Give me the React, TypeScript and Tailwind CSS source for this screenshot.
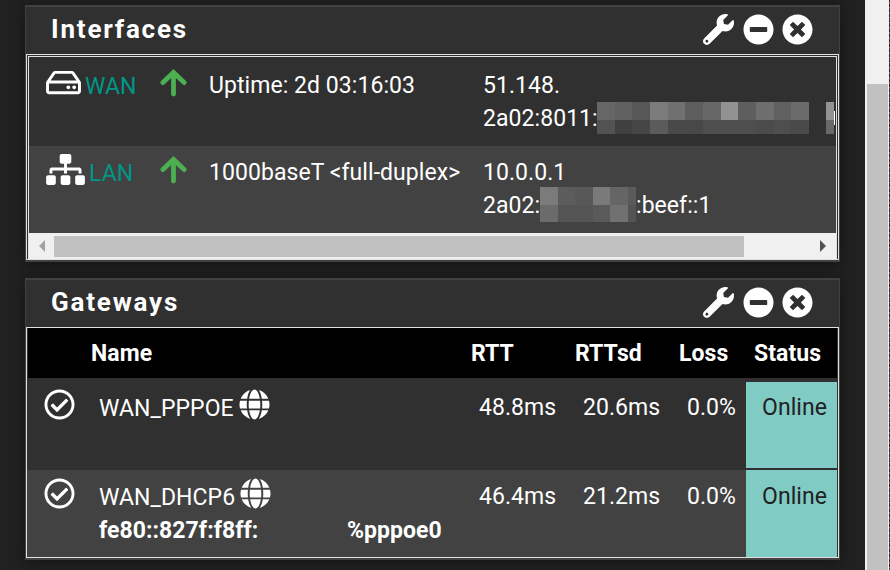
import type { ReactNode } from 'react';
import { FaGlobe, FaMinusCircle, FaRegCheckCircle, FaRegHdd, FaSitemap, FaTimesCircle, FaWrench } from 'react-icons/fa';

const wanTop = ['#666666', '#616161', '#575757', '#7b7b7b', '#707070', '#5d5d5d', '#676767', '#929292', '#5e5e5e', '#6e6e6e', '#606060', '#6b6b6b'];
const wanBottom = ['#535353', '#404040', '#464646', '#5b5b5b', '#494949', '#484848', '#4e4e4e', '#4f4f4f', '#4e4e4e', '#4b4b4b', '#4e4e4e', '#4a4a4a'];
const lanTop = ['#7b7b7b', '#5c5c5c', '#585858', '#7a7a7a', '#656565'];
const lanBottom = ['#6b6b6b', '#545454', '#545454', '#5a5a5a', '#717171'];

function Blocks({ colors, className }: { colors: string[]; className: string }) {
  return (
    <div className={`flex ${className}`}>
      {colors.map((c, i) => (
        <span key={i} className="h-full flex-1" style={{ backgroundColor: c }} />
      ))}
    </div>
  );
}

function UpArrow() {
  return (
    <svg viewBox="0 0 27 31" className="h-[31px] w-[27px]" fill="none" stroke="#4caf50" strokeWidth="4.8" strokeLinecap="round">
      <path d="M2.9 15.6 13.5 5.4 24.1 15.6" strokeLinejoin="miter" />
      <path d="M13.5 6V27" />
    </svg>
  );
}

function Panel({ title, className, children }: { title: string; className: string; children: ReactNode }) {
  return (
    <section className={`flex w-[815px] flex-col border-x border-y-2 border-[#424242] bg-[#303030] shadow-[0_2px_14px_rgba(0,0,0,0.45)] ${className}`}>
      <header className="flex h-[47px] shrink-0 items-center justify-between pr-[26px] pl-[25px]">
        <h2 className="pb-[3px] text-[26px] leading-[34px] font-bold tracking-[1.8px]">{title}</h2>
        <div className="flex items-center gap-[8.5px] pb-[3px]">
          <FaWrench size={31} />
          <FaMinusCircle size={31} />
          <FaTimesCircle size={31} />
        </div>
      </header>
      {children}
    </section>
  );
}

function GatewayRow({ name, address, rtt, sd, className }: { name: string; address?: ReactNode; rtt: string; sd: string; className: string }) {
  return (
    <div className={`flex ${className}`}>
      <div className="w-[72px] pt-[8px] pl-[17px]">
        <FaRegCheckCircle size={31} />
      </div>
      <div className="w-[380px]">
        <div className="flex h-[44px] pt-[8px]">
          <span className="pt-[3px]">{name}</span>
          <FaGlobe size={31} className="ml-[5px]" />
        </div>
        {address}
      </div>
      <div className="w-[104px] pt-[10px]">{rtt}</div>
      <div className="w-[104px] pt-[10px]">{sd}</div>
      <div className="w-[59px] pt-[10px]">0.0%</div>
    </div>
  );
}

export default function App() {
  return (
    <main className="flex h-[570px] w-[890px] justify-between overflow-hidden bg-[#212121] font-[Roboto,sans-serif] text-[23px] leading-[33px] tracking-[0.06px] text-white">
      <div className="flex flex-col pt-[5px] pl-[25px]">
        <Panel title="Interfaces" className="h-[257px]">
          <div className="flex h-[206px] flex-col border border-[#e0e0e0] p-px">
            <div className="flex flex-1 flex-col border border-b-0 border-[#e0e0e0]">
              <div className="flex h-[89px] w-[806px] overflow-hidden">
                <div className="flex w-[131px] pt-[10px] pl-[17px]">
                  <FaRegHdd className="h-[31px] w-[35px]" />
                  <span className="ml-[4px] pt-[3px] text-[#009688]">WAN</span>
                </div>
                <div className="w-[49px] pt-[10px]">
                  <UpArrow />
                </div>
                <div className="w-[274px] pt-[12px]">Uptime: 2d 03:16:03</div>
                <div className="w-[352px] shrink-0 pt-[12px]">
                  51.148.
                  <div className="flex whitespace-nowrap">
                    <span className="w-[114px] shrink-0">2a02:8011:</span>
                    <div className="w-[212px] shrink-0">
                      <Blocks colors={wanTop} className="h-[18px]" />
                      <Blocks colors={wanBottom} className="h-[14px]" />
                    </div>
                    <div className="ml-[17px] w-[8px] shrink-0">
                      <Blocks colors={['#929292']} className="h-[18px]" />
                      <Blocks colors={['#686868']} className="h-[14px]" />
                    </div>
                    <span className="mt-[9px] h-[14px] w-px bg-white" />
                  </div>
                </div>
              </div>
              <div className="flex h-[87px] bg-[#424242]">
                <div className="flex w-[131px] pt-[8px] pl-[17px]">
                  <FaSitemap className="h-[31px] w-[39px]" />
                  <span className="ml-[4px] pt-[3px] text-[#009688]">LAN</span>
                </div>
                <div className="w-[49px] pt-[8px]">
                  <UpArrow />
                </div>
                <div className="w-[274px] pt-[10px]">1000baseT &lt;full-duplex&gt;</div>
                <div className="pt-[10px]">
                  10.0.0.1
                  <div className="flex">
                    <span className="w-[57px]">2a02:</span>
                    <div className="-mt-[2px] flex w-[96px]">
                      <div className="w-[88px]">
                        <Blocks colors={lanTop} className="h-[18px]" />
                        <Blocks colors={lanBottom} className="h-[17px]" />
                      </div>
                      <div className="w-[8px]">
                        <Blocks colors={['#5b5b5b']} className="h-[18px]" />
                        <Blocks colors={['#545454']} className="h-[17px]" />
                      </div>
                    </div>
                    <span>:beef::1</span>
                  </div>
                </div>
              </div>
              <div className="flex h-[26px] items-center bg-[#f0f0f0]">
                <div className="flex w-[25px] justify-center">
                  <span className="border-y-[6px] border-r-[6px] border-y-transparent border-r-[#a3a3a3]" />
                </div>
                <div className="h-[21px] w-[690px] bg-[#c1c1c1]" />
                <span className="ml-[76px] border-y-[6px] border-l-[6px] border-y-transparent border-l-[#505050]" />
              </div>
            </div>
          </div>
        </Panel>

        <Panel title="Gateways" className="mt-[16px] h-[282px]">
          <div className="flex h-[231px] flex-col border border-[#e0e0e0]">
            <div className="ml-px flex h-[50px] w-[809px] bg-black pt-[9px] font-bold">
              <span className="w-[380px] pl-[63px]">Name</span>
              <span className="w-[104px] pl-[63px]">RTT</span>
              <span className="w-[104px] pl-[63px]">RTTsd</span>
              <span className="w-[75px] pl-[63px]">Loss</span>
              <span className="pl-[63px]">Status</span>
            </div>
            <div className="flex">
              <div className="w-[719px]">
                <GatewayRow name="WAN_PPPOE" rtt="48.8ms" sd="20.6ms" className="h-[92px] pt-[3px]" />
                <GatewayRow
                  name="WAN_DHCP6"
                  rtt="46.4ms"
                  sd="21.2ms"
                  className="h-[87px] bg-[#424242]"
                  address={
                    <div className="flex font-bold">
                      <span className="w-[248px]">fe80::827f:f8ff:</span>
                      <span>%pppoe0</span>
                    </div>
                  }
                />
              </div>
              <div className="flex w-[91px] flex-col gap-[2px] pt-[4px] text-[#212121]">
                <div className="h-[86px] bg-[#80cbc4] pt-[9px] pl-[16px]">Online</div>
                <div className="h-[87px] bg-[#80cbc4] pt-[10px] pl-[16px]">Online</div>
              </div>
            </div>
          </div>
        </Panel>
      </div>
      <aside className="flex w-[25px]">
        <div className="w-[24px] bg-[#f0f0f0] pt-[84px]">
          <div className="ml-[2px] h-full w-[21px] bg-[#c1c1c1]" />
        </div>
        <div className="w-px bg-[repeating-linear-gradient(to_bottom,#222_0px,#222_2px,#777_2px,#777_3px,#345_3px,#345_5px)]" />
      </aside>
    </main>
  );
}
